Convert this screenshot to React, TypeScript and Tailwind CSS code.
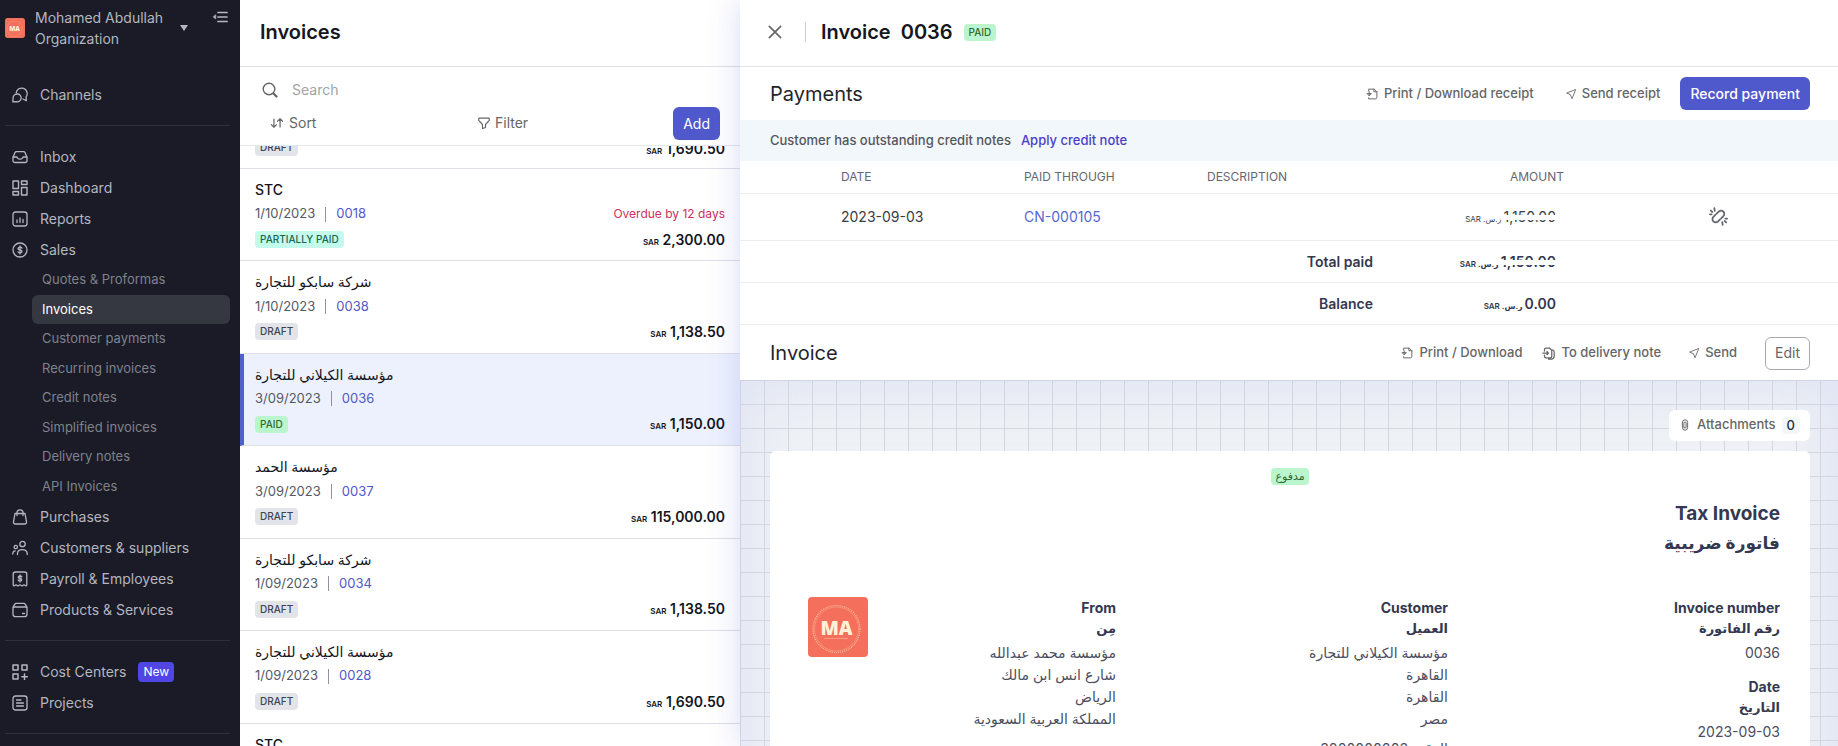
import { ReactNode } from "react";

type IconProps = { children: ReactNode; size?: number; width?: number };

function Svg({ children, size = 16, width = 1.3 }: IconProps) {
  return (
    <svg
      width={size}
      height={size}
      viewBox="0 0 16 16"
      fill="none"
      stroke="currentColor"
      strokeWidth={width}
      strokeLinecap="round"
      strokeLinejoin="round"
      aria-hidden="true"
      className="shrink-0"
    >
      {children}
    </svg>
  );
}

const icons = {
  channels: (
    <Svg>
      <path d="M4.200 5.800a5.500 5.500 0 1 1 9.900 4l.2 4-3.300-1.800" />
      <path d="M5 7a3.900 3.900 0 1 1-.6 7.700L.8 14.900l.3-3.400A3.900 3.900 0 0 1 5 7z" />
    </Svg>
  ),
  inbox: (
    <Svg>
      <path d="M1 8.500 3 3.600Q3.400 2.600 4.500 2.600h7q1.100 0 1.500 1l2 4.900v3q0 2-2 2H3q-2 0-2-2z" />
      <path d="M1.200 8H5q.4 2.200 3 2.200T11 8h3.800" />
    </Svg>
  ),
  dashboard: (
    <Svg width={1.4}>
      <path d="M1 1h5.500v7.500H1zM1 11.500h5.500V15H1zM9.500 1H15v3.500H9.500zM9.500 7.500H15V15H9.500z" />
    </Svg>
  ),
  reports: (
    <Svg>
      <rect x="1" y="1" width="14" height="14" rx="2.500" />
      <path d="M5 9v2.500M8 7v4.500M11 8.500v3" />
    </Svg>
  ),
  sales: (
    <Svg>
      <circle cx="8" cy="8" r="7" />
      <path d="M10 6.200Q9.600 5.200 8 5.200T6 6.500Q6 7.700 8 8t2 1.500q0 1.300-2 1.300T6 9.800M8 4v8" />
    </Svg>
  ),
  purchases: (
    <Svg>
      <path d="M3 4.500h10l1.500 8.300q.2 2.200-2 2.200h-9q-2.200 0-2-2.200z" />
      <path d="M5 6.500V3.500Q5.200.8 8 .8t3 2.700v3" />
    </Svg>
  ),
  customers: (
    <Svg>
      <circle cx="10.500" cy="4" r="2.700" />
      <circle cx="3.800" cy="7" r="1.700" />
      <path d="M5.500 14.500v-1.300q.3-3.500 4.700-3.500t5 3.500v1.300M.8 14v-.8q.2-2.200 2.400-2.400" />
    </Svg>
  ),
  payroll: (
    <Svg>
      <path d="M1.200 14V3.200q0-2.200 2.200-2.200h9.200q2.200 0 2.200 2.200V14q-.2 1-1.200.8l-1.600-1-1.900 1.200L8 13.800 5.900 15 4 13.800l-1.600 1q-1 .2-1.200-.8z" />
      <path d="M9.800 6Q9.500 5 8 5T6.300 6.200Q6.300 7.200 8 7.500t1.700 1.300Q9.700 10 8 10T6.200 9M8 4v7" />
    </Svg>
  ),
  products: (
    <Svg>
      <path d="M1 5.200 2.700 2.300Q3.300 1.300 4.300 1.300h7.400q1 0 1.600 1L15 5.200V12q0 2.700-2.500 2.700h-9Q1 14.700 1 12zM1 5h14M10.500 11.500h2" />
    </Svg>
  ),
  centers: (
    <Svg width={1.5}>
      <path d="M1 1h5v5H1zM10 1h5v5h-5zM1 10h5v5H1zM12.500 10v5.500M9.800 12.700h5.500" />
    </Svg>
  ),
  projects: (
    <Svg>
      <rect x="1" y="1" width="14" height="14" rx="2.500" />
      <path d="M4.500 5H9M4.500 8h7M4.500 11h7" />
    </Svg>
  ),
};

function SendIcon() {
  return (
    <Svg size={10} width={1.4}>
      <path d="M15 1 1 6.500 7 9l2.500 6z" />
    </Svg>
  );
}

function PrintIcon() {
  return (
    <Svg size={12} width={1.3}>
      <path d="M3.500 4V1.500h7.500L14.500 5v7.500q0 2-2 2h-9V13M10.500 1.500V5h4M1.500 7.500h5.500M4.300 5v5M2.500 8.500l1.800 2 1.800-2" />
    </Svg>
  );
}

function DeliveryIcon() {
  return (
    <Svg size={13} width={1.5}>
      <path d="M3 5V3.500q0-2 2-2h4.500L12 4v7.500q0 2-2 2H5q-2 0-2-2V10M1 7.500h7M6 5.500l2 2-2 2M13 3.500q2 .5 2 2.500v5.500q0 3-3 3.500H8" />
    </Svg>
  );
}

function UnlinkIcon() {
  return (
    <Svg size={19} width={1.5}>
      <path d="m6.500 5.500 1.700-1.700a2.700 2.700 0 0 1 3.900 3.900L10.300 9.500M9.300 10.500l-1.700 1.700a2.700 2.700 0 0 1-3.900-3.900L5.500 6.500" />
      <path d="M4.800 3.200 4.500 1M2.800 4.200 1.500 3M2.200 6.200H.8M11.200 12.800l.3 2.200M13.200 11.800l1.300 1.200M13.800 9.800h1.400" />
    </Svg>
  );
}

const mainNav = [
  { label: "Inbox", icon: icons.inbox },
  { label: "Dashboard", icon: icons.dashboard },
  { label: "Reports", icon: icons.reports },
  { label: "Sales", icon: icons.sales },
];

const salesNav = [
  "Quotes & Proformas",
  "Invoices",
  "Customer payments",
  "Recurring invoices",
  "Credit notes",
  "Simplified invoices",
  "Delivery notes",
  "API Invoices",
];

const secondaryNav = [
  { label: "Purchases", icon: icons.purchases },
  { label: "Customers & suppliers", icon: icons.customers },
  { label: "Payroll & Employees", icon: icons.payroll },
  { label: "Products & Services", icon: icons.products },
];

type Status = "DRAFT" | "PAID" | "PARTIALLY PAID";

type Invoice = {
  customer: string;
  date: string;
  number: string;
  status: Status;
  amount: string;
  overdue?: string;
};

const invoices: Invoice[] = [
  { customer: "STC", date: "1/10/2023", number: "0018", status: "PARTIALLY PAID", amount: "2,300.00", overdue: "Overdue by 12 days" },
  { customer: "شركة سابكو للتجارة", date: "1/10/2023", number: "0038", status: "DRAFT", amount: "1,138.50" },
  { customer: "مؤسسة الكيلاني للتجارة", date: "3/09/2023", number: "0036", status: "PAID", amount: "1,150.00" },
  { customer: "مؤسسة الحمد", date: "3/09/2023", number: "0037", status: "DRAFT", amount: "115,000.00" },
  { customer: "شركة سابكو للتجارة", date: "1/09/2023", number: "0034", status: "DRAFT", amount: "1,138.50" },
  { customer: "مؤسسة الكيلاني للتجارة", date: "1/09/2023", number: "0028", status: "DRAFT", amount: "1,690.50" },
  { customer: "STC", date: "", number: "", status: "DRAFT", amount: "" },
];

const statusStyles: Record<Status, string> = {
  DRAFT: "bg-[#e2e4e9] text-[#3f4451]",
  PAID: "bg-[#bbf5ce] text-[#2f6b2f]",
  "PARTIALLY PAID": "bg-[#c3faec] text-[#1d6650]",
};

function StatusBadge({ status }: { status: Status }) {
  return (
    <span
      className={`inline-flex h-[17px] items-center rounded px-[5px] text-[10px] font-medium ${statusStyles[status]}`}
    >
      {status}
    </span>
  );
}

function NavItem({ label, icon, badge }: { label: string; icon: ReactNode; badge?: string }) {
  return (
    <a href="#" className="flex h-[31px] items-center gap-3 pl-3 text-sm">
      {icon}
      <span>{label}</span>
      {badge ? (
        <span className="rounded bg-[#4f46e5] px-[5px] text-xs leading-5 text-white">{badge}</span>
      ) : null}
    </a>
  );
}

function Logo({ size, radius }: { size: number; radius: number }) {
  return (
    <svg width={size} height={size} viewBox="0 0 60 60" className="shrink-0" role="img" aria-label="MA">
      <rect width="60" height="60" rx={radius} fill="#f4705c" />
      <circle cx="28.500" cy="32" r="23.500" fill="none" stroke="#fbbf9f" strokeWidth="1.200" strokeDasharray="1 1" />
      <circle cx="28.500" cy="32" r="22" fill="none" stroke="#f8a58b" strokeWidth=".6" />
      <path d="M16 41.500h24" stroke="#f9ab8e" strokeWidth=".7" />
      <text x="28.500" y="37.500" textAnchor="middle" fontFamily="Open Sans, sans-serif" fontWeight="800" fontSize="19" fill="#fff1d6">
        MA
      </text>
    </svg>
  );
}

function Sidebar() {
  return (
    <aside className="w-60 shrink-0 bg-[#1a1b26] pr-2.5 pl-[5px] text-[#b4b6c0]">
      <div className="flex h-[79px] items-start pt-[7px]">
        <button type="button" className="flex items-center text-left text-sm leading-[21px]">
          <Logo size={20} radius={8} />
          <span className="ml-2.5 w-[145px]">Mohamed Abdullah Organization</span>
          <svg width="8" height="6" viewBox="0 0 8 6" fill="currentColor" aria-hidden="true">
            <path d="M0 0h8L4 6z" />
          </svg>
        </button>
        <button type="button" aria-label="Collapse menu" className="ml-auto pt-px pr-0.5">
          <Svg size={16} width={1.7}>
            <path d="M6 4.500h9M6 9h9M6 13.500h9" />
            <path d="M3.800 7v4L1.200 9z" fill="currentColor" strokeWidth=".6" />
          </Svg>
        </button>
      </div>
      <nav className="-ml-[5px]">
        <NavItem label="Channels" icon={icons.channels} />
        <hr className="my-[15px] ml-[5px] border-[#2e303b]" />
        {mainNav.map((item) => (
          <NavItem key={item.label} {...item} />
        ))}
        <div className="ml-8 grid h-[236px] auto-rows-fr text-[13px]">
          {salesNav.map((label) => (
            <a
              key={label}
              href="#"
              className={
                label === "Invoices"
                  ? "flex items-center rounded-md bg-[#353741] pl-2.5 text-white"
                  : "flex items-center pl-2.5 text-[#7f828d]"
              }
            >
              {label}
            </a>
          ))}
        </div>
        {secondaryNav.map((item) => (
          <NavItem key={item.label} {...item} />
        ))}
        <hr className="my-[15px] ml-[5px] border-[#2e303b]" />
        <NavItem label="Cost Centers" icon={icons.centers} badge="New" />
        <NavItem label="Projects" icon={icons.projects} />
        <hr className="my-[15px] ml-[5px] border-[#2e303b]" />
      </nav>
    </aside>
  );
}

function Amount({ value }: { value: string }) {
  return (
    <span className="text-sm font-semibold text-[#15161e]">
      <span className="text-[8px]">SAR</span> {value}
    </span>
  );
}

function InvoiceRow({ invoice, active }: { invoice: Invoice; active: boolean }) {
  return (
    <li
      className={`flex flex-col border-b border-[#dfe0e6] pt-[9px] pr-[15px] ${
        active ? "border-l-4 border-l-[#5060cc] bg-[#edf1fe] pl-[11px]" : "pl-[15px]"
      }`}
    >
      <p className="text-sm leading-6 font-medium text-[#15161e]">{invoice.customer}</p>
      {invoice.number ? (
        <>
          <p className="flex h-6 items-center text-[13px] text-[#555965]">
            {invoice.date}
            <span className="mx-2.5 h-[15px] w-px bg-[#8f93a0]" />
            <a href="#" className="text-[#5158c8]">
              {invoice.number}
            </a>
            {invoice.overdue ? <span className="ml-auto text-xs text-[#cb2f62]">{invoice.overdue}</span> : null}
          </p>
          <p className="mt-[5px] flex h-[17px] items-center justify-between">
            <StatusBadge status={invoice.status} />
            <Amount value={invoice.amount} />
          </p>
        </>
      ) : null}
    </li>
  );
}

function InvoiceList() {
  return (
    <section className="flex w-[500px] shrink-0 flex-col bg-white">
      <header className="flex h-[67px] shrink-0 items-center border-b border-[#dfe0e6] px-5 pb-0.5">
        <h1 className="text-xl font-semibold text-[#15161e]">Invoices</h1>
      </header>
      <div className="h-[79px] shrink-0 border-b border-[#e6e7ec] px-5 text-[#666]">
        <label className="flex h-10 items-center gap-3.5 pt-1.5 pl-0.5">
          <Svg size={16} width={1.4}>
            <circle cx="7" cy="7" r="5.800" />
            <path d="m11.500 11.500 3 3" strokeWidth="2.200" />
          </Svg>
          <input
            type="search"
            aria-label="Search"
            placeholder="Search"
            className="w-full text-sm outline-none placeholder:text-[#a3a3a6]"
          />
        </label>
        <div className="flex h-[33px] text-sm">
          <button type="button" className="flex h-8 w-[206px] items-center gap-[5px] pl-2.5">
            <Svg size={14} width={1.4}>
              <path d="M4.500 3.500v9M1.500 9.800l3 3 3-3M11.500 12.500v-9M8.500 6.200l3-3 3 3" />
            </Svg>
            Sort
          </button>
          <button type="button" className="flex h-8 items-center gap-[5px] pl-3">
            <Svg size={12} width={1.5}>
              <path d="M1 1.500h14v3L10 10v4l-4 1.500V10L1 4.500z" />
            </Svg>
            Filter
          </button>
          <button type="button" className="ml-auto rounded-md bg-[#5059cb] px-2.5 text-white">
            Add
          </button>
        </div>
      </div>
      <div className="min-h-0 flex-1 overflow-hidden">
        <div className="-mt-[7px] flex h-[30px] items-start justify-between border-b border-[#dfe0e6] px-[15px]">
          <StatusBadge status="DRAFT" />
          <Amount value="1,690.50" />
        </div>
        <ul className="grid h-[647px] auto-rows-fr">
          {invoices.map((invoice, index) => (
            <InvoiceRow key={index} invoice={invoice} active={invoice.number === "0036"} />
          ))}
        </ul>
      </div>
    </section>
  );
}

function Money({ amount, banded = false }: { amount: string; banded?: boolean }) {
  return (
    <span className="inline-flex items-baseline gap-0.5">
      <span className="text-[8px]">SAR .ر.س</span>
      <span className="relative">
        {amount}
        {banded ? <span className="absolute inset-x-0 top-2 h-[5px] bg-white" /> : null}
      </span>
    </span>
  );
}

function Payments() {
  return (
    <section className="text-sm">
      <div className="flex h-[53px] items-center pr-7 pl-[30px] text-[13px] font-medium text-[#666]">
        <h2 className="mr-auto text-xl font-normal text-[#24252c]">Payments</h2>
        <button type="button" className="flex items-center gap-1.5">
          <PrintIcon />
          Print / Download receipt
        </button>
        <button type="button" className="ml-8 flex items-center gap-1.5">
          <SendIcon />
          Send receipt
        </button>
        <button type="button" className="ml-5 h-[33px] rounded-md bg-[#5059cb] px-2.5 text-sm text-white">
          Record payment
        </button>
      </div>
      <p className="flex h-[41px] items-center gap-2.5 bg-[#f1f7fa] px-[30px] text-[13px] font-medium text-[#55565c]">
        Customer has outstanding credit notes
        <a href="#" className="text-[#4b3fc9]">
          Apply credit note
        </a>
      </p>
      <table className="w-full table-fixed text-[#3a3c46]">
        <colgroup>
          <col className="w-[85px]" />
          <col className="w-1/6" />
          <col className="w-1/6" />
          <col className="w-1/6" />
          <col className="w-1/6" />
          <col className="w-1/6" />
          <col />
        </colgroup>
        <thead>
          <tr className="h-8 border-b border-[#ededf1] text-left text-xs text-[#66676d]">
            <td />
            <th className="pl-4 font-normal">DATE</th>
            <th className="pl-4 font-normal">PAID THROUGH</th>
            <th className="pl-4 font-normal">DESCRIPTION</th>
            <th colSpan={2} className="pr-44 text-right font-normal">
              AMOUNT
            </th>
            <td />
          </tr>
        </thead>
        <tbody>
          <tr className="h-[47px] border-b border-[#ededf1]">
            <td />
            <td className="pl-4">2023-09-03</td>
            <td className="pl-4">
              <a href="#" className="text-[#5468cf]">
                CN-000105
              </a>
            </td>
            <td />
            <td className="pr-px text-right">
              <Money amount="1,150.00" banded />
            </td>
            <td className="pr-3">
              <button type="button" aria-label="Unlink payment" className="ml-auto block text-[#66676d]">
                <UnlinkIcon />
              </button>
            </td>
            <td />
          </tr>
          <tr className="h-[42px] border-b border-[#ededf1] text-right font-semibold text-[#343850]">
            <th colSpan={4} className="pt-0.5 pr-px font-semibold">
              Total paid
            </th>
            <td className="pt-0.5 pr-px">
              <Money amount="1,150.00" banded />
            </td>
            <td colSpan={2} />
          </tr>
          <tr className="h-[42px] border-b border-[#ededf1] text-right font-semibold text-[#343850]">
            <th colSpan={4} className="pt-0.5 pr-px font-semibold">
              Balance
            </th>
            <td className="pt-0.5 pr-px">
              <Money amount="0.00" />
            </td>
            <td colSpan={2} />
          </tr>
        </tbody>
      </table>
    </section>
  );
}

function Field({ en, ar, children }: { en: string; ar: string; children: ReactNode }) {
  return (
    <div className="mb-3">
      <h3 className="text-sm leading-[21px] font-bold">{en}</h3>
      <p className="text-[13px] leading-[21px] font-bold">{ar}</p>
      <div className="pt-[3px] text-sm leading-[22px] text-[#4b4e60]">{children}</div>
    </div>
  );
}

function InvoicePreview() {
  return (
    <div className="flex-1 bg-[#eef1f5] bg-[linear-gradient(to_right,#d5d8e0_1px,transparent_1px),linear-gradient(to_bottom,#d5d8e0_1px,transparent_1px)] bg-[size:24px_24px] pt-[30px] pr-7 pl-[30px] shadow-[inset_0_0_60px_rgba(190,195,240,0.35)]">
      <button
        type="button"
        className="ml-auto flex h-[31px] items-center gap-1.5 rounded-md bg-white px-2.5 text-[13px] font-medium text-[#666]"
      >
        <Svg size={12} width={1.3}>
          <path d="M4.500 4.500v6.500q0 4 3.500 4t3.500-4V4.500Q11.500 1 8 1T4.500 4.500M6.500 11V5.500Q6.500 4 8 4t1.500 1.500V11q0 1-1.500 1t-1.500-1" />
        </Svg>
        Attachments
        <span className="rounded bg-[#f1f7fb] px-[5px] leading-[17px] text-[#2c2f3a]">0</span>
      </button>
      <article className="mt-2.5 h-[400px] rounded-md bg-white px-[30px] pt-[17px] text-right text-[#343850]">
        <div className="flex justify-center">
          <span className="rounded bg-[#bbf5ce] px-1 text-[11px] leading-[17px] text-[#2f6b2f]">مدفوع</span>
        </div>
        <h2 className="mt-3.5 text-[19px] leading-[30px] font-bold">Tax Invoice</h2>
        <p className="text-[17px] leading-7 font-bold">فاتورة ضريبية</p>
        <div className="mt-10 grid grid-cols-[1fr_332px_332px] pl-2">
          <div className="flex justify-between">
            <Logo size={60} radius={4} />
            <Field en="From" ar="مِن">
              <p>مؤسسة محمد عبدالله</p>
              <p>شارع انس ابن مالك</p>
              <p>الرياض</p>
              <p>المملكة العربية السعودية</p>
            </Field>
          </div>
          <Field en="Customer" ar="العميل">
            <p>مؤسسة الكيلاني للتجارة</p>
            <p>القاهرة</p>
            <p>القاهرة</p>
            <p>مصر</p>
            <p className="mt-2">الرقم: 3000000003</p>
          </Field>
          <div>
            <Field en="Invoice number" ar="رقم الفاتورة">
              <p>0036</p>
            </Field>
            <Field en="Date" ar="التاريخ">
              <p>2023-09-03</p>
            </Field>
          </div>
        </div>
      </article>
    </div>
  );
}

function InvoiceDetail() {
  return (
    <main className="relative flex min-w-0 flex-1 flex-col bg-white shadow-[0_0_30px_rgba(90,90,210,0.22)]">
      <header className="flex h-[67px] shrink-0 items-center border-b border-[#e2e3e8] pr-7 pb-0.5 pl-[26px]">
        <button type="button" aria-label="Close" className="text-[#666]">
          <Svg size={18} width={1.5}>
            <path d="m3 3 10 10M13 3 3 13" />
          </Svg>
        </button>
        <span className="mr-[15px] ml-[21px] h-5 w-px bg-[#cfd0d6]" />
        <h2 className="mr-[11px] flex gap-2.5 text-xl font-semibold text-[#15161e]">
          <span>Invoice</span>
          <span>0036</span>
        </h2>
        <StatusBadge status="PAID" />
      </header>
      <Payments />
      <div className="flex h-[55px] shrink-0 items-center pt-0.5 pr-7 pl-[30px] text-[13px] font-medium text-[#666]">
        <h2 className="mr-auto text-xl font-normal text-[#24252c]">Invoice</h2>
        <button type="button" className="flex items-center gap-1.5">
          <PrintIcon />
          Print / Download
        </button>
        <button type="button" className="ml-5 flex items-center gap-1.5">
          <DeliveryIcon />
          To delivery note
        </button>
        <button type="button" className="ml-7 flex items-center gap-1.5">
          <SendIcon />
          Send
        </button>
        <button type="button" className="ml-7 h-[33px] rounded-md border border-[#a9aab0] px-[9px] text-sm font-normal">
          Edit
        </button>
      </div>
      <InvoicePreview />
    </main>
  );
}

export default function App() {
  return (
    <div className="flex h-screen overflow-hidden bg-white font-['Inter','DejaVu_Sans',sans-serif]">
      <Sidebar />
      <InvoiceList />
      <InvoiceDetail />
    </div>
  );
}
